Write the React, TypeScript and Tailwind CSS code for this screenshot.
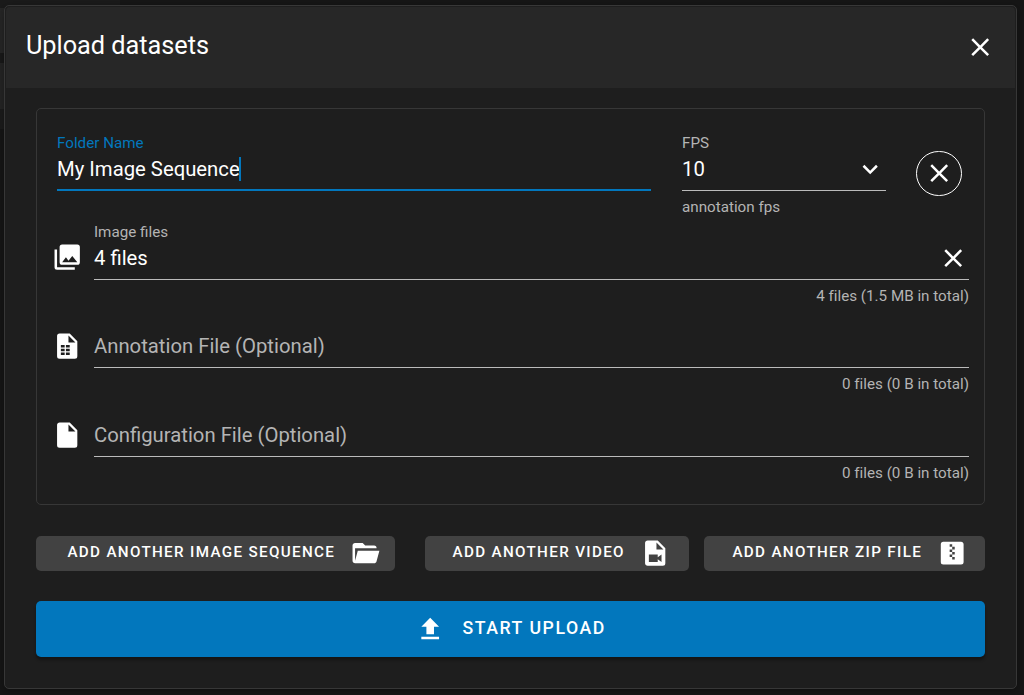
import type { ReactNode } from 'react';

const icons = {
  close:
    'M19,6.41L17.59,5L12,10.59L6.41,5L5,6.41L10.59,12L5,17.59L6.41,19L12,13.41L17.59,19L19,17.59L13.41,12L19,6.41Z',
  chevronDown: 'M7.41,8.58L12,13.17L16.59,8.58L18,10L12,16L6,10L7.41,8.58Z',
  images:
    'M22,16V4A2,2 0 0,0 20,2H8A2,2 0 0,0 6,4V16A2,2 0 0,0 8,18H20A2,2 0 0,0 22,16M11,12L13.03,14.71L16,11L20,16H8M2,6V20A2,2 0 0,0 4,22H18V20H4V6',
  fileTable:
    'M14,2H6A2,2 0 0,0 4,4V20A2,2 0 0,0 6,22H18A2,2 0 0,0 20,20V8L14,2M10,19H7V17H10V19M10,16H7V14H10V16M10,13H7V11H10V13M14,19H11V17H14V19M14,16H11V14H14V16M14,13H11V11H14V13M13,9V3.5L18.5,9H13Z',
  file: 'M13,9V3.5L18.5,9M6,2C4.89,2 4,2.89 4,4V20A2,2 0 0,0 6,22H18A2,2 0 0,0 20,20V8L14,2H6Z',
  folderOpen:
    'M19,20H4C2.89,20 2,19.1 2,18V6C2,4.89 2.89,4 4,4H10L12,6H19A2,2 0 0,1 21,8H21L4,8V18L6.14,10H23.21L20.93,18.5C20.7,19.37 19.92,20 19,20Z',
  fileVideo:
    'M13,9H18.5L13,3.5V9M6,2H14L20,8V20A2,2 0 0,1 18,22H6C4.89,22 4,21.1 4,20V4C4,2.89 4.89,2 6,2M17,19V13L14,15.2V13H7V19H14V16.8L17,19Z',
  zipBox:
    'M14,17H12V15H10V13H12V15H14M14,9H12V11H14V13H12V11H10V9H12V7H10V5H12V7H14M19,3H5A2,2 0 0,0 3,5V19A2,2 0 0,0 5,21H19A2,2 0 0,0 21,19V5C21,3.89 20.1,3 19,3Z',
  upload: 'M9,16V10H5L12,3L19,10H15V16H9M5,20V18H19V20H5Z',
};

function Icon({ name, className = '' }: { name: keyof typeof icons; className?: string }) {
  return (
    <svg viewBox="0 0 24 24" fill="currentColor" fillRule="evenodd" className={`size-[30.4px] shrink-0 overflow-visible ${className}`}>
      <path d={icons[name]} />
    </svg>
  );
}

function FileRow({ icon, iconClass, label, value, hint, clearable }: {
  icon: keyof typeof icons;
  iconClass: string;
  label: string;
  value?: string;
  hint: string;
  clearable?: boolean;
}) {
  return (
    <div className="flex h-[82px] pr-[15px] pl-[15px]">
      <Icon name={icon} className={`mr-[11.6px] ${iconClass}`} />
      <div className="flex grow flex-col">
        <div className="h-[18px] text-[15.2px] leading-[18px] text-[#b4b4b4]">{value ? label : ''}</div>
        <div className="flex h-[38px] items-center justify-between pb-1 text-[20.3px]">
          {value ? <span>{value}</span> : <span className="text-[#b4b4b4]">{label}</span>}
          {clearable && <Icon name="close" className="mr-[0.6px]" />}
        </div>
        <div className="h-px bg-[#bbbbbb]" />
        <div className="mt-[7px] text-right text-[15.2px] leading-[18px] tracking-[0.005px] text-[#b4b4b4]">{hint}</div>
      </div>
    </div>
  );
}

function AddButton({ icon, className, children }: { icon: keyof typeof icons; className: string; children: ReactNode }) {
  return (
    <button
      className={`flex h-[35px] items-center rounded-[5px] bg-[#424242] text-[15.2px] font-medium tracking-[1.34px] whitespace-nowrap ${className}`}
    >
      <span className="pb-[3px]">{children}</span>
      <Icon name={icon} className="mb-[0.6px] ml-auto" />
    </button>
  );
}

export default function App() {
  return (
    <div className="flex h-[695px] w-[1024px] overflow-hidden bg-[#161616] font-['Roboto',sans-serif] text-white">
      <div className="w-1 shrink-0">
        <div className="h-2 w-[120px] bg-[#1b1b1b]" />
        <div className="h-[45px] bg-[#272727]" />
        <div className="h-[10px] bg-[#191919]" />
        <div className="h-[46px] bg-[#252525]" />
        <div className="h-5 bg-[#1c1c1c]" />
      </div>
      <div className="mt-[5px] h-[684px] w-[1013px] shrink-0 rounded-[5px] border border-[#373737] bg-[#1e1e1e] shadow-[0_2px_10px_rgba(0,0,0,0.35)]">
        <header className="mx-px mt-px flex h-[81px] items-center justify-between rounded-t-[4px] bg-[#272727] pr-5 pb-[2px] pl-5">
          <h1 className="pb-[2px] text-[25.3px] tracking-[-0.03px]">Upload datasets</h1>
          <Icon name="close" className="-mr-[0.4px] -mb-[0.6px]" />
        </header>
        <main className="mx-[31px] mt-5">
          <section className="h-[397px] rounded-[5px] border border-[#373737] pt-[25px]">
            <div className="mb-[7px] flex h-[82px] pl-5">
              <div className="flex w-[594px] flex-col">
                <div className="text-[15.2px] leading-[18px] text-[#0277bd]">Folder Name</div>
                <div className="flex h-[37px] items-center pb-[3px] text-[20.3px]">
                  My Image Sequence
                  <span className="-ml-px h-6 w-[2px] bg-[#0277bd]" />
                </div>
                <div className="h-[2px] bg-[#0277bd]" />
              </div>
              <div className="ml-[31px] flex w-[204px] flex-col">
                <div className="text-[15.2px] leading-[18px] text-[#b4b4b4]">FPS</div>
                <div className="flex h-[38px] items-center justify-between pb-1 text-[20.3px]">
                  10
                  <Icon name="chevronDown" className="mr-[0.6px]" />
                </div>
                <div className="h-px bg-[#bbbbbb]" />
                <div className="mt-[7px] text-[15.2px] leading-[18px] text-[#b4b4b4]">annotation fps</div>
              </div>
              <button className="mt-[17px] ml-[30px] flex h-[45px] w-[46px] items-center justify-center rounded-full border border-white">
                <Icon name="close" className="mr-[0.3px] mb-px" />
              </button>
            </div>
            <div className="mb-[6px]">
              <FileRow icon="images" iconClass="mt-[19.4px]" label="Image files" value="4 files" hint="4 files (1.5 MB in total)" clearable />
            </div>
            <div className="mb-[7px]">
              <FileRow icon="fileTable" iconClass="mt-[20.4px]" label="Annotation File (Optional)" hint="0 files (0 B in total)" />
            </div>
            <FileRow icon="file" iconClass="mt-[19.5px]" label="Configuration File (Optional)" hint="0 files (0 B in total)" />
          </section>
          <div className="mt-[31px] flex">
            <AddButton icon="folderOpen" className="w-[359px] pr-[14.4px] pl-[31.4px]">ADD ANOTHER IMAGE SEQUENCE</AddButton>
            <AddButton icon="fileVideo" className="ml-[30px] w-[264px] pr-[18.4px] pl-[27.5px]">ADD ANOTHER VIDEO</AddButton>
            <AddButton icon="zipBox" className="ml-[15px] w-[281px] pr-[17.6px] pl-[28.4px]">ADD ANOTHER ZIP FILE</AddButton>
          </div>
          <button className="mt-[30px] flex h-14 w-full items-center rounded-[5px] bg-[#0277bd] pl-[379px] text-[17.7px] font-medium tracking-[1.56px] shadow-[0_3px_3px_rgba(0,0,0,0.35)]">
            <Icon name="upload" className="mb-[0.4px]" />
            <span className="ml-[17px] pb-[2px]">START UPLOAD</span>
          </button>
        </main>
      </div>
    </div>
  );
}
